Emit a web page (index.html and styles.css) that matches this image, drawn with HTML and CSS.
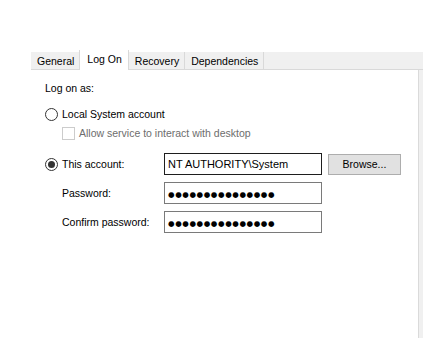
FILE: index.html
```html
<!DOCTYPE html>
<html lang="en">
<head>
  <meta charset="UTF-8" />
  <title>Service Properties - Log On</title>
  <link rel="stylesheet" href="styles.css">
</head>
<body>

  <div class="frame">
    <div class="tabstrip">
      <div class="tab">General</div>
      <div class="tab active">Log On</div>
      <div class="tab">Recovery</div>
      <div class="tab">Dependencies</div>
    </div>

    <div class="main">
      <div class="panel">
        <div class="heading">Log on as:</div>

        <div class="row radio-row">
          <span class="radio"></span>
          <span class="text">Local System account</span>
        </div>

        <div class="row check-row">
          <span class="check"></span>
          <span class="text disabled">Allow service to interact with desktop</span>
        </div>

        <div class="row field-row first">
          <span class="radio checked"></span>
          <span class="label">This account:</span>
          <div class="input dark">NT AUTHORITY\System</div>
          <div class="button">Browse...</div>
        </div>

        <div class="row field-row indent">
          <span class="label">Password:</span>
          <div class="input"><span class="dots">●●●●●●●●●●●●●●●</span></div>
        </div>

        <div class="row field-row indent">
          <span class="label">Confirm password:</span>
          <div class="input"><span class="dots">●●●●●●●●●●●●●●●</span></div>
        </div>
      </div>
      <div class="side"></div>
    </div>
  </div>

</body>
</html>
```

FILE: styles.css
```css
body {
  margin: 0;
  background-color: #ffffff;
  font-family: 'Liberation Sans', Arial, sans-serif;
  font-size: 10.5px;
  color: #000000;
}

.frame {
  margin-top: 52px;
  height: 286px;
  display: flex;
  flex-direction: column;
}

.tabstrip {
  margin-left: 31px;
  height: 17px;
  background-color: #f0f0f0;
  border-bottom: 1px solid #d9d9d9;
  display: flex;
  align-items: flex-start;
}

.tab {
  height: 17px;
  line-height: 18px;
  padding: 0 5px 0 6px;
  border-right: 1px solid #d9d9d9;
  box-sizing: border-box;
}

.tab.active {
  background-color: #ffffff;
  height: 20px;
  margin-top: -2px;
  line-height: 18px;
  padding: 0 6px 0 7px;
  border-left: 1px solid #d9d9d9;
  margin-left: -1px;
}

.main {
  flex: 1;
  display: flex;
}

.panel {
  width: 419px;
  background-color: #ffffff;
  border-right: 1px solid #dadada;
  padding: 10px 0 0 45px;
  box-sizing: border-box;
}

.side {
  flex: 1;
  background-color: #f0f0f0;
}

.heading {
  line-height: 16px;
}

.row {
  display: flex;
  align-items: center;
}

.radio-row {
  margin-top: 10px;
  height: 16px;
}

.check-row {
  margin-top: 3px;
  height: 16px;
  padding-left: 17px;
}

.radio {
  width: 13px;
  height: 13px;
  border: 1px solid #333333;
  border-radius: 50%;
  box-sizing: border-box;
  margin-right: 4px;
  position: relative;
  flex-shrink: 0;
}

.radio.checked::after {
  content: "";
  position: absolute;
  left: 2px;
  top: 2px;
  width: 7px;
  height: 7px;
  border-radius: 50%;
  background-color: #333333;
}

.check {
  width: 13px;
  height: 13px;
  border: 1px solid #cccccc;
  box-sizing: border-box;
  margin-right: 4px;
}

.disabled {
  color: #6d6d6d;
}

.field-row {
  margin-top: 7px;
  height: 22px;
}

.field-row.first {
  margin-top: 12px;
}

.field-row.indent {
  padding-left: 17px;
}

.label {
  width: 102px;
}

.input {
  width: 158px;
  height: 22px;
  border: 1px solid #7a7a7a;
  box-sizing: border-box;
  padding-left: 3px;
  font-size: 11px;
  line-height: 20px;
  white-space: nowrap;
  overflow: hidden;
}

.input.dark {
  border-color: #1e1e1e;
}

.dots {
  font-family: 'DejaVu Sans', sans-serif;
  font-size: 7.5px;
  letter-spacing: 0.6px;
}

.button {
  margin-left: 6px;
  width: 73px;
  height: 21px;
  line-height: 19px;
  text-align: center;
  background-color: #e1e1e1;
  border: 1px solid #adadad;
  box-sizing: border-box;
}
```
